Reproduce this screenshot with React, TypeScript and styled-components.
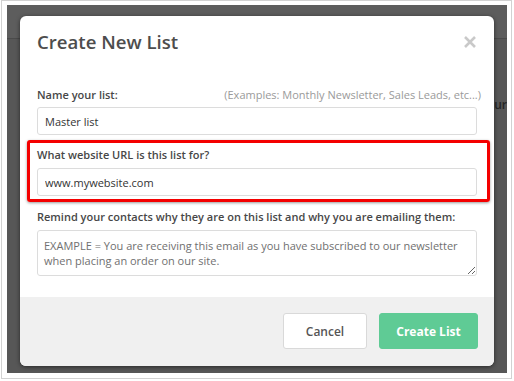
import React from "react";
import styled, { createGlobalStyle } from "styled-components";

const Global = createGlobalStyle`
  html, body { margin: 0; padding: 0; background: #fff; }
  body { font-family: "Open Sans", "Noto Sans", sans-serif; }
  * { box-sizing: border-box; }
`;

const Frame = styled.div`
  width: 511px;
  height: 379px;
  margin-left: 1px;
  border: 1px solid #d2d2d2;
  padding: 4px 4px 5px 5px;
  background: #fff;
`;

const Backdrop = styled.div`
  position: relative;
  overflow: hidden;
  height: 100%;
  display: flex;
  flex-direction: column;
  padding: 11px 13px 7px 13px;
  background: linear-gradient(#5d5d5d 0 33px, #4b4b4b 33px 34px, #575757 34px);
`;

const GhostText = styled.span`
  position: absolute;
  top: 91px;
  right: 0;
  font-size: 12px;
  font-weight: 600;
  color: #262626;
`;

const Modal = styled.div`
  position: relative;
  z-index: 1;
  flex: 1;
  display: flex;
  flex-direction: column;
  background: #fff;
  border-radius: 6px;
  overflow: hidden;
  box-shadow: 0 1px 4px rgba(0, 0, 0, 0.55);
`;

const Header = styled.div`
  display: flex;
  align-items: center;
  justify-content: space-between;
  padding: 14px 17px 0 17px;
`;

const Title = styled.h1`
  margin: 0;
  font-size: 18.6px;
  line-height: 24px;
  font-weight: 600;
  color: #4d4d4d;
`;

const CloseButton = styled.button`
  border: 0;
  padding: 0;
  background: none;
  width: 14px;
  height: 14px;
  display: flex;
  cursor: pointer;
`;

const Body = styled.div`
  display: flex;
  flex-direction: column;
  padding: 33px 17px 21px 17px;
`;

const LabelRow = styled.div`
  display: flex;
  justify-content: space-between;
  align-items: baseline;
  margin-right: -4px;
`;

const Label = styled.label`
  font-size: 11px;
  line-height: 15px;
  font-weight: 600;
  color: #474747;
`;

const Hint = styled.span`
  font-size: 11px;
  line-height: 15px;
  color: #9a9a9a;
`;

const TextInput = styled.input<{ $gap?: number }>`
  display: block;
  width: 100%;
  height: 28px;
  margin-top: ${(p) => p.$gap ?? 5}px;
  padding: 0 7px;
  border: 1px solid #dcdcdc;
  border-radius: 3px;
  font-family: inherit;
  font-size: 11px;
  color: #333;
  background: #fff;
  outline: none;
`;

const Highlight = styled.div`
  display: flex;
  flex-direction: column;
  margin: 5px -13px 7px -10px;
  padding: 4px 10px 3px 7px;
  border: 3px solid #f40000;
  border-radius: 3px;
  box-shadow: 0 1px 3px rgba(0, 0, 0, 0.4);
`;

const TextArea = styled.textarea`
  display: block;
  width: 100%;
  height: 46px;
  margin-top: 6px;
  padding: 7px 6px;
  border: 1px solid #dcdcdc;
  border-radius: 3px;
  font-family: inherit;
  font-size: 11px;
  line-height: 15px;
  color: #333;
  resize: vertical;
  outline: none;
  &::placeholder { color: #707070; }
`;

const Footer = styled.div`
  flex: 1;
  display: flex;
  justify-content: flex-end;
  align-items: flex-start;
  gap: 12px;
  padding: 16px 16px 0 0;
  background: #f0f0f0;
`;

const Button = styled.button<{ $primary?: boolean }>`
  height: 36px;
  width: ${(p) => (p.$primary ? 99 : 84)}px;
  border-radius: 3px;
  font-family: inherit;
  font-size: 12px;
  font-weight: ${(p) => (p.$primary ? 700 : 600)};
  color: ${(p) => (p.$primary ? "#fff" : "#555")};
  background: ${(p) => (p.$primary ? "#5fcb95" : "#fff")};
  border: 1px solid ${(p) => (p.$primary ? "#5fcb95" : "#d9d9d9")};
  cursor: pointer;
`;

export default function App() {
  return (
    <>
      <Global />
      <Frame>
        <Backdrop>
          <GhostText>Your</GhostText>
          <Modal>
            <Header>
              <Title>Create New List</Title>
              <CloseButton aria-label="Close">
                <svg width="14" height="14" viewBox="0 0 14 14">
                  <path d="M2 2 L12 12 M12 2 L2 12" stroke="#c9c9c9" strokeWidth="2.6" strokeLinecap="butt" />
                </svg>
              </CloseButton>
            </Header>
            <Body>
              <LabelRow>
                <Label>Name your list:</Label>
                <Hint>(Examples: Monthly Newsletter, Sales Leads, etc...)</Hint>
              </LabelRow>
              <TextInput defaultValue="Master list" />
              <Highlight>
                <Label>What website URL is this list for?</Label>
                <TextInput $gap={6} defaultValue="www.mywebsite.com" />
              </Highlight>
              <Label>Remind your contacts why they are on this list and why you are emailing them:</Label>
              <TextArea placeholder="EXAMPLE = You are receiving this email as you have subscribed to our newsletter when placing an order on our site." />
            </Body>
            <Footer>
              <Button>Cancel</Button>
              <Button $primary>Create List</Button>
            </Footer>
          </Modal>
        </Backdrop>
      </Frame>
    </>
  );
}
